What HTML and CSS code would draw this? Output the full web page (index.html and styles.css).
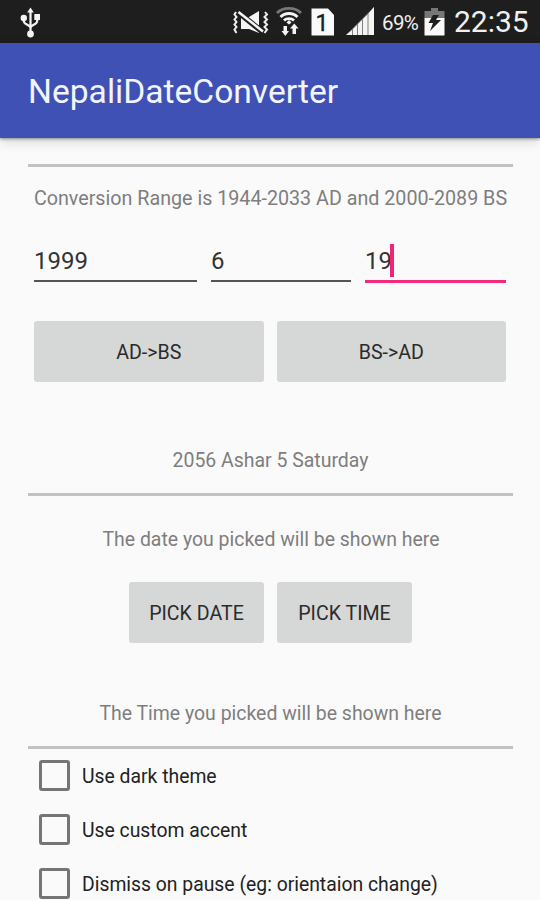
FILE: index.html
```html
<!DOCTYPE html>
<html lang="en">
<head>
<meta charset="utf-8">
<title>NepaliDateConverter</title>
<link rel="stylesheet" href="styles.css">
</head>
<body>
<div class="status">
  <svg class="usb" width="24" height="32" viewBox="0 0 24 32" fill="none" stroke="#f4f4f4" stroke-width="2.200">
    <path d="M11.500 5V27M4.800 11V15C4.800 19 11.500 18.500 11.500 22C11.500 18.500 18.200 19 18.200 15V11"/>
    <path d="M11.500 1.500L14.800 6.500H8.200Z" fill="#f4f4f4" stroke="none"/>
    <circle cx="4.800" cy="12" r="3.200" fill="#f4f4f4" stroke="none"/>
    <path d="M15.300 8H21V14H15.300Z" fill="#f4f4f4" stroke="none"/>
    <circle cx="11.500" cy="28" r="3.400" fill="#f4f4f4" stroke="none"/>
  </svg>
  <svg class="mute" width="38" height="26" viewBox="0 0 38 26">
    <g fill="none" stroke="#eee" stroke-width="2">
      <path d="M4 3L2.500 5.500L4.500 8L2.500 10.500L4.500 13L2.500 15.500L4.500 18L2.500 20.500L4.500 24"/>
      <path d="M33 3L35 5.500L32.500 8L35 10.500L32.500 13L35 15.500L32.500 18L35 20.500L32.500 24"/>
    </g>
    <path d="M9 8H17L27 2V24L17 20H9Z" fill="#f4f4f4"/>
    <path d="M7 3.800L30 22.500" stroke="#1e1e1e" stroke-width="5.500"/>
    <path d="M6.500 3L31 22.500" stroke="#f4f4f4" stroke-width="2.600"/>
  </svg>
  <svg class="wifi" width="26" height="31" viewBox="0 0 26 31" fill="none" stroke-width="2.800">
    <path d="M1 7C7 .8 19 .8 25 7" stroke="#777"/>
    <path d="M4.500 11C9 6.300 17 6.300 21.500 11M8 14.500C10.500 12 15.500 12 18 14.500" stroke="#f4f4f4"/>
    <path d="M13 14L15.500 16.500L13 18.500L10.500 16.500Z" fill="#f4f4f4"/>
    <path d="M7.500 20H11V25H13L9.300 30L5.500 25H7.500ZM16.500 28V22.500H14L18.300 17.500L22.500 22.500H20V28Z" fill="#f4f4f4"/>
  </svg>
  <svg class="sim" width="24" height="28" viewBox="0 0 24 28">
    <path d="M.5 .5H17L23 7V27.500H.5Z" fill="#fafafa"/>
    <text x="11" y="22.500" text-anchor="middle" class="sim-number">1</text>
  </svg>
  <svg class="signal" width="29" height="29" viewBox="0 0 29 29" fill="#f4f4f4">
    <path d="M0 28L6 23V28ZM7 22L11 18V28H7ZM12 17L16 13V28H12ZM17 12L21.500 7.500V28H17ZM22.500 6.500L28 0V28H22.500Z"/>
    <path d="M0 28L28 0V28Z" opacity=".45"/>
  </svg>
  <span class="percent">69%</span>
  <svg class="battery" width="21" height="28" viewBox="0 0 21 28">
    <path d="M7 0H14V3H20.500V10H.5V3H7Z" fill="#777"/>
    <path d="M.5 10H20.500V27.500H.5Z" fill="#fafafa"/>
    <path d="M9 7H15L12 12H17L6 23L9 15H4.500Z" fill="#1e1e1e"/>
  </svg>
  <span class="clock">22:35</span>
</div>
<header class="appbar"><h1>NepaliDateConverter</h1></header>
<main>
  <section class="converter">
    <p class="range">Conversion Range is 1944-2033 AD and 2000-2089 BS</p>
    <div class="fields">
      <div class="field year">1999</div>
      <div class="field">6</div>
      <div class="field focused">19<span class="caret"></span></div>
    </div>
    <div class="buttons wide">
      <button>AD-&gt;BS</button>
      <button>BS-&gt;AD</button>
    </div>
    <p class="result">2056 Ashar 5 Saturday</p>
  </section>
  <section class="picker">
    <p class="picked-date">The date you picked will be shown here</p>
    <div class="buttons">
      <button>PICK DATE</button>
      <button>PICK TIME</button>
    </div>
    <p class="picked-time">The Time you picked will be shown here</p>
  </section>
  <section class="options">
    <div class="option"><span class="box"></span><span class="label">Use dark theme</span></div>
    <div class="option"><span class="box"></span><span class="label">Use custom accent</span></div>
    <div class="option"><span class="box"></span><span class="label">Dismiss on pause (eg: orientaion change)</span></div>
  </section>
</main>
</body>
</html>
```

FILE: styles.css
```css
* { box-sizing: border-box; }
html { overflow: hidden; }
body {
  margin: 0;
  height: 900px;
  overflow: hidden;
  background: #fafafa;
  font-family: Roboto, "Liberation Sans", sans-serif;
  font-size: 19.45px;
  color: #7e7e7e;
}
p, h1 { margin: 0; font-weight: 400; white-space: nowrap; }
svg { display: block; flex: none; }

.status {
  display: flex;
  align-items: center;
  height: 43px;
  padding: 0 9px 0 19px;
  background: #1e1e1e;
  color: #f0f0f0;
}
.mute { margin-left: 189px; }
.wifi { margin-left: 6px; }
.sim { margin-left: 9px; }
.signal { margin-left: 11px; }
.sim-number { font: 400 23px Roboto, sans-serif; fill: #1e1e1e; stroke: #1e1e1e; stroke-width: .4px; }
.percent { width: 37px; margin-left: 7px; padding-top: 3px; font-size: 20.5px; letter-spacing: -.6px; }
.battery { margin-left: 5px; }
.clock { margin-left: 9px; font-size: 30px; line-height: 43px; white-space: nowrap; }

.appbar {
  display: flex;
  align-items: center;
  height: 95px;
  padding: 3px 28px 0;
  background: #3f51b5;
  box-shadow: 0 1px 3px rgba(0, 0, 0, .4), 0 4px 12px rgba(0, 0, 0, .13);
}
.appbar h1 { font-size: 33.6px; line-height: 40px; color: #f2f4ff; }

main { padding: 26px 27px 0 28px; }
.converter, .picker, .options { border-top: 3px solid #c2c2c2; text-align: center; }
.converter { height: 329px; padding-top: 18px; }
.picker { height: 253px; padding-top: 30px; }
p { height: 26px; line-height: 28px; }
.range { font-size: 19.7px; }

.fields {
  display: flex;
  gap: 14px;
  height: 72px;
  padding: 27px 7px 0 6px;
  color: #333;
  text-align: left;
}
.field {
  display: flex;
  align-items: center;
  width: 140px;
  height: 44px;
  padding-top: 3px;
  border-bottom: 2px solid #555;
  font-size: 24px;
}
.field.year { width: 163px; }
.field.focused { width: 141px; height: 45px; border-bottom: 3px solid #f42b7d; }
.caret { width: 4px; height: 33px; margin: -1px 0 0 -2px; background: #f0257a; }

.buttons { display: flex; justify-content: center; gap: 13px; }
.buttons.wide { margin: 38px 7px 65px 6px; }
button {
  width: 135px;
  height: 61px;
  padding: 2px 0 0;
  border: 0;
  border-radius: 3px;
  background: #d6d7d7;
  color: #2b2b2b;
  font: 400 19.6px Roboto, sans-serif;
}
.wide button { flex: 1; }
.picker .buttons { margin: 30px 0 57px; }
.picked-date { margin-left: 1px; }

.options { text-align: left; color: #222; font-size: 19.35px; }
.option {
  display: flex;
  align-items: center;
  gap: 12px;
  height: 54px;
  padding: 0 0 1px 11px;
  white-space: nowrap;
}
.label { padding-top: 2px; }
.box { width: 31px; height: 31px; border: 3px solid #757575; border-radius: 3px; }
```
